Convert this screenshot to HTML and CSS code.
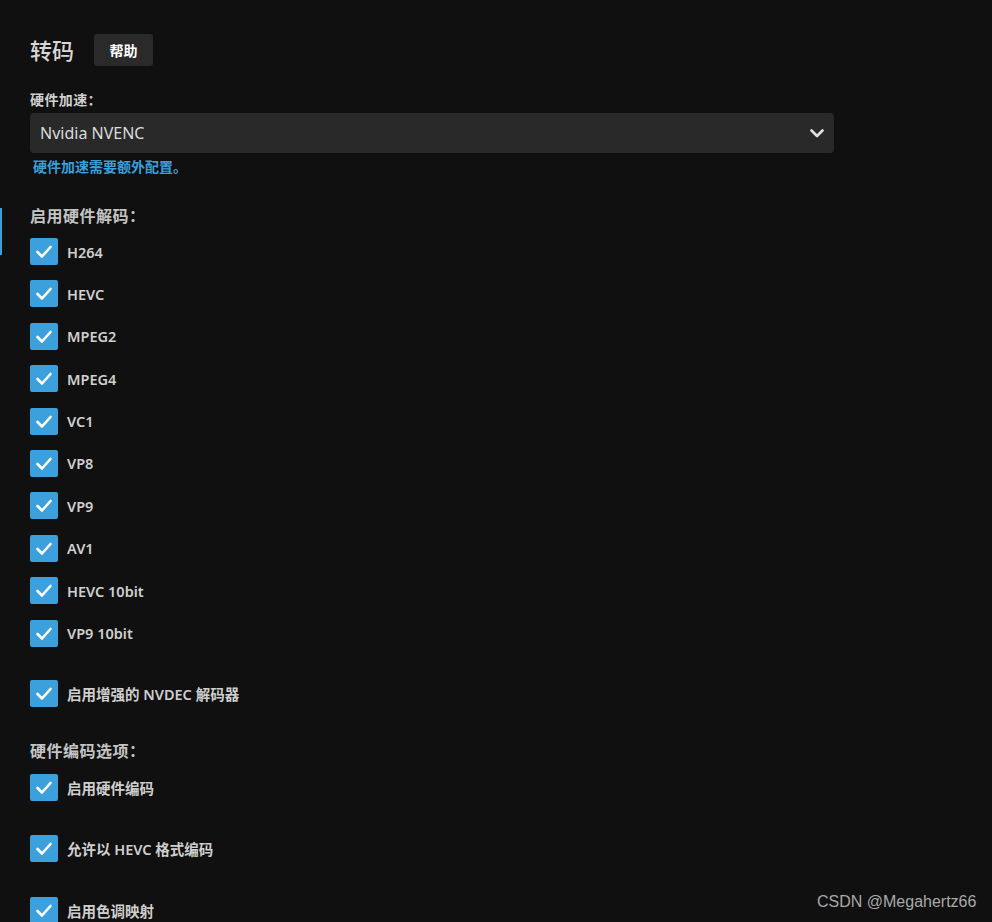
FILE: index.html
```html
<!DOCTYPE html>
<html lang="zh">
<head>
<meta charset="utf-8">
<title>转码</title>
<link rel="stylesheet" href="styles.css">
</head>
<body>
<div class="page">
  <div class="header">
    <h2 class="title">转码</h2>
    <button class="help">帮助</button>
  </div>

  <label class="field-label">硬件加速：</label>
  <div class="select">
    <span>Nvidia NVENC</span>
    <svg class="chev" width="14" height="9" viewBox="0 0 14 9"><path d="M1.5 1.5 L7 7 L12.5 1.5" fill="none" stroke="#e0e0e0" stroke-width="2.6" stroke-linecap="round" stroke-linejoin="round"/></svg>
  </div>
  <div class="hint">硬件加速需要额外配置。</div>

  <div class="section">
    <div class="focus-bar"></div>
    <h3 class="sec-title">启用硬件解码：</h3>
    <div class="checks">
      <div class="check"><span class="box"><svg viewBox="0 0 28 27"><path d="M7.5 14 L12 18.5 L20.5 9" fill="none" stroke="#fff" stroke-width="2.6" stroke-linecap="round" stroke-linejoin="round"/></svg></span><span class="lbl">H264</span></div>
      <div class="check"><span class="box"><svg viewBox="0 0 28 27"><path d="M7.5 14 L12 18.5 L20.5 9" fill="none" stroke="#fff" stroke-width="2.6" stroke-linecap="round" stroke-linejoin="round"/></svg></span><span class="lbl">HEVC</span></div>
      <div class="check"><span class="box"><svg viewBox="0 0 28 27"><path d="M7.5 14 L12 18.5 L20.5 9" fill="none" stroke="#fff" stroke-width="2.6" stroke-linecap="round" stroke-linejoin="round"/></svg></span><span class="lbl">MPEG2</span></div>
      <div class="check"><span class="box"><svg viewBox="0 0 28 27"><path d="M7.5 14 L12 18.5 L20.5 9" fill="none" stroke="#fff" stroke-width="2.6" stroke-linecap="round" stroke-linejoin="round"/></svg></span><span class="lbl">MPEG4</span></div>
      <div class="check"><span class="box"><svg viewBox="0 0 28 27"><path d="M7.5 14 L12 18.5 L20.5 9" fill="none" stroke="#fff" stroke-width="2.6" stroke-linecap="round" stroke-linejoin="round"/></svg></span><span class="lbl">VC1</span></div>
      <div class="check"><span class="box"><svg viewBox="0 0 28 27"><path d="M7.5 14 L12 18.5 L20.5 9" fill="none" stroke="#fff" stroke-width="2.6" stroke-linecap="round" stroke-linejoin="round"/></svg></span><span class="lbl">VP8</span></div>
      <div class="check"><span class="box"><svg viewBox="0 0 28 27"><path d="M7.5 14 L12 18.5 L20.5 9" fill="none" stroke="#fff" stroke-width="2.6" stroke-linecap="round" stroke-linejoin="round"/></svg></span><span class="lbl">VP9</span></div>
      <div class="check"><span class="box"><svg viewBox="0 0 28 27"><path d="M7.5 14 L12 18.5 L20.5 9" fill="none" stroke="#fff" stroke-width="2.6" stroke-linecap="round" stroke-linejoin="round"/></svg></span><span class="lbl">AV1</span></div>
      <div class="check"><span class="box"><svg viewBox="0 0 28 27"><path d="M7.5 14 L12 18.5 L20.5 9" fill="none" stroke="#fff" stroke-width="2.6" stroke-linecap="round" stroke-linejoin="round"/></svg></span><span class="lbl">HEVC 10bit</span></div>
      <div class="check"><span class="box"><svg viewBox="0 0 28 27"><path d="M7.5 14 L12 18.5 L20.5 9" fill="none" stroke="#fff" stroke-width="2.6" stroke-linecap="round" stroke-linejoin="round"/></svg></span><span class="lbl">VP9 10bit</span></div>
    </div>
  </div>

  <div class="check nvdec"><span class="box"><svg viewBox="0 0 28 27"><path d="M7.5 14 L12 18.5 L20.5 9" fill="none" stroke="#fff" stroke-width="2.6" stroke-linecap="round" stroke-linejoin="round"/></svg></span><span class="lbl">启用增强的 NVDEC 解码器</span></div>

  <h3 class="sec-title enc-title">硬件编码选项：</h3>
  <div class="enc-checks">
    <div class="check"><span class="box"><svg viewBox="0 0 28 27"><path d="M7.5 14 L12 18.5 L20.5 9" fill="none" stroke="#fff" stroke-width="2.6" stroke-linecap="round" stroke-linejoin="round"/></svg></span><span class="lbl">启用硬件编码</span></div>
    <div class="check"><span class="box"><svg viewBox="0 0 28 27"><path d="M7.5 14 L12 18.5 L20.5 9" fill="none" stroke="#fff" stroke-width="2.6" stroke-linecap="round" stroke-linejoin="round"/></svg></span><span class="lbl">允许以 HEVC 格式编码</span></div>
    <div class="check"><span class="box"><svg viewBox="0 0 28 27"><path d="M7.5 14 L12 18.5 L20.5 9" fill="none" stroke="#fff" stroke-width="2.6" stroke-linecap="round" stroke-linejoin="round"/></svg></span><span class="lbl">启用色调映射</span></div>
  </div>
</div>
<div class="watermark">CSDN @Megahertz66</div>
</body>
</html>
```
FILE: styles.css
```css
html, body {
  margin: 0;
  padding: 0;
  background: #101010;
  height: 922px;
  overflow: hidden;
}
body {
  font-family: "Noto Sans", "Noto Sans CJK SC", sans-serif;
  color: #d6d6d6;
  position: relative;
}
.page {
  padding: 34px 0 0 30px;
  position: relative;
}
.header {
  display: flex;
  align-items: center;
  height: 32px;
}
.title {
  margin: 0 20px 0 0;
  font-size: 22px;
  font-weight: 500;
  color: #d8d8d8;
  line-height: 32px;
}
.help {
  height: 32px;
  width: 59px;
  border: 0;
  border-radius: 3px;
  background: #2a2a2a;
  color: #fff;
  font-family: "Noto Sans CJK SC", sans-serif;
  font-weight: 700;
  font-size: 14px;
  padding: 0;
}
.field-label {
  display: block;
  margin-top: 24px;
  line-height: 20px;
  font-size: 14px;
  font-weight: 600;
  letter-spacing: 0.4px;
  color: #d0d0d0;
}
.select {
  margin-top: 3px;
  width: 804px;
  height: 40px;
  box-sizing: border-box;
  background: #292929;
  border-radius: 4px;
  display: flex;
  align-items: center;
  justify-content: space-between;
  padding: 0 10px 0 10px;
  font-size: 16px;
  color: #dcdcdc;
}
.hint {
  margin-top: 5px;
  margin-left: 3px;
  line-height: 18px;
  font-size: 14px;
  font-weight: 700;
  color: #3a9fdb;
}
.section {
  position: relative;
}
.focus-bar {
  position: absolute;
  left: -30px;
  top: 3px;
  width: 2px;
  height: 47px;
  background: #3a9fdb;
}
.sec-title {
  margin: 29px 0 0 0;
  line-height: 22px;
  font-size: 16px;
  font-weight: 600;
  letter-spacing: 0.5px;
  color: #c4c4c4;
}
.checks {
  margin-top: 11px;
  display: flex;
  flex-direction: column;
  gap: 15.4px;
}
.check {
  display: flex;
  align-items: center;
  height: 27px;
}
.box {
  width: 28px;
  height: 27px;
  background: #3ca0dc;
  border-radius: 2px;
  display: flex;
  flex: none;
}
.box svg {
  width: 28px;
  height: 27px;
}
.lbl {
  margin-left: 9px;
  font-size: 14.5px;
  font-weight: 600;
  color: #cfcfcf;
}
.nvdec {
  margin-top: 33.4px;
}
.enc-title {
  margin-top: 33px;
}
.enc-checks {
  margin-top: 12px;
  display: flex;
  flex-direction: column;
  gap: 34.5px;
}
.watermark {
  position: absolute;
  left: 817px;
  top: 892px;
  font-family: "Liberation Sans", Arial, sans-serif;
  font-size: 16px;
  line-height: 20px;
  color: #a9a9a9;
}
```
